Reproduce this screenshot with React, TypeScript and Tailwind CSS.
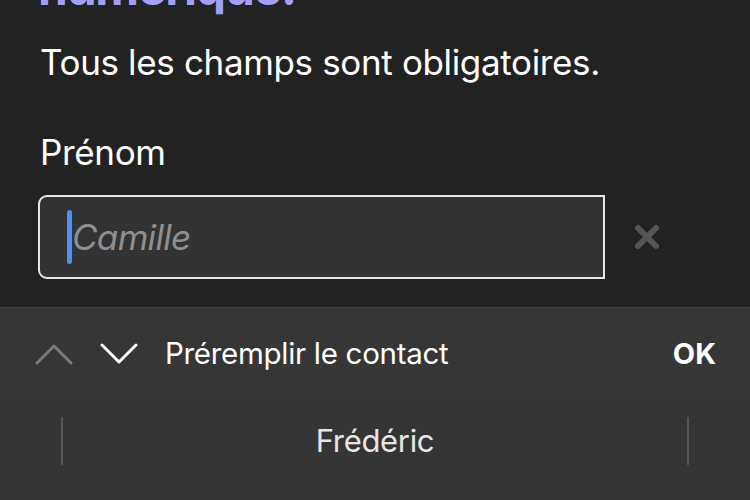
const font = { fontFamily: "Inter, 'Noto Sans', sans-serif" }

function ClearIcon() {
  return (
    <svg width="28" height="28" viewBox="0 0 28 28" className="shrink-0">
      <path d="M5 5 L23 23 M23 5 L5 23" stroke="#555555" strokeWidth="6" strokeLinecap="round" />
    </svg>
  )
}

function Chevron({ up, color }: { up?: boolean; color: string }) {
  return (
    <svg width="38" height="22" viewBox="0 0 38 22" className="shrink-0">
      <polyline
        points={up ? "2,20 19,3 36,20" : "2,2 19,19 36,2"}
        fill="none"
        stroke={color}
        strokeWidth="3"
        strokeLinecap="round"
        strokeLinejoin="round"
      />
    </svg>
  )
}

export default function App() {
  return (
    <div
      className="w-[750px] h-[500px] bg-[#222222] overflow-hidden flex flex-col text-white antialiased"
      style={font}
    >
      {/* Form area */}
      <div className="h-[307px] px-[40px] flex flex-col">
        <div className="-mt-[36px] -ml-[2px] text-[48px] leading-[48px] font-bold text-[#a19ff6] tracking-tight">
          numérique.
        </div>
        <p className="mt-[30px] text-[35px] leading-[40px] tracking-[-0.01em]">
          Tous les champs sont obligatoires.
        </p>
        <label className="mt-[50px] text-[35px] leading-[40px] tracking-[-0.01em]">Prénom</label>
        <div className="mt-[23px] flex items-center">
          <div className="-ml-[2px] w-[567px] h-[84px] border-2 border-[#e6e6e6] rounded-l-[9px] bg-[#333333] flex items-center pl-[27px]">
            <span className="w-[5px] h-[54px] rounded-full bg-[#4d8ef7]" />
            <span className="text-[35px] italic text-[#8f8f8f] tracking-[-0.02em]">Camille</span>
          </div>
          <div className="ml-[28px]">
            <ClearIcon />
          </div>
        </div>
      </div>

      {/* Keyboard toolbar */}
      <div className="h-[88px] border-t border-[#454545] bg-[#363636] flex items-center pl-[35px] pr-[34px] pt-[4px]">
        <Chevron up color="#7a7a7a" />
        <div className="ml-[27px]">
          <Chevron color="#ffffff" />
        </div>
        <span className="ml-[27px] text-[29.5px] tracking-[-0.01em]">Préremplir le contact</span>
        <span className="ml-auto text-[29px] font-bold">OK</span>
      </div>

      {/* Suggestions */}
      <div className="flex-1 bg-[#353535] px-[61px] pt-[22px]">
        <div className="h-[48px] flex items-center border-x-2 border-[#575757]">
          <span className="flex-1 text-center text-[31px] text-[#e6e6e6] tracking-[-0.01em]">Frédéric</span>
        </div>
      </div>
    </div>
  )
}
